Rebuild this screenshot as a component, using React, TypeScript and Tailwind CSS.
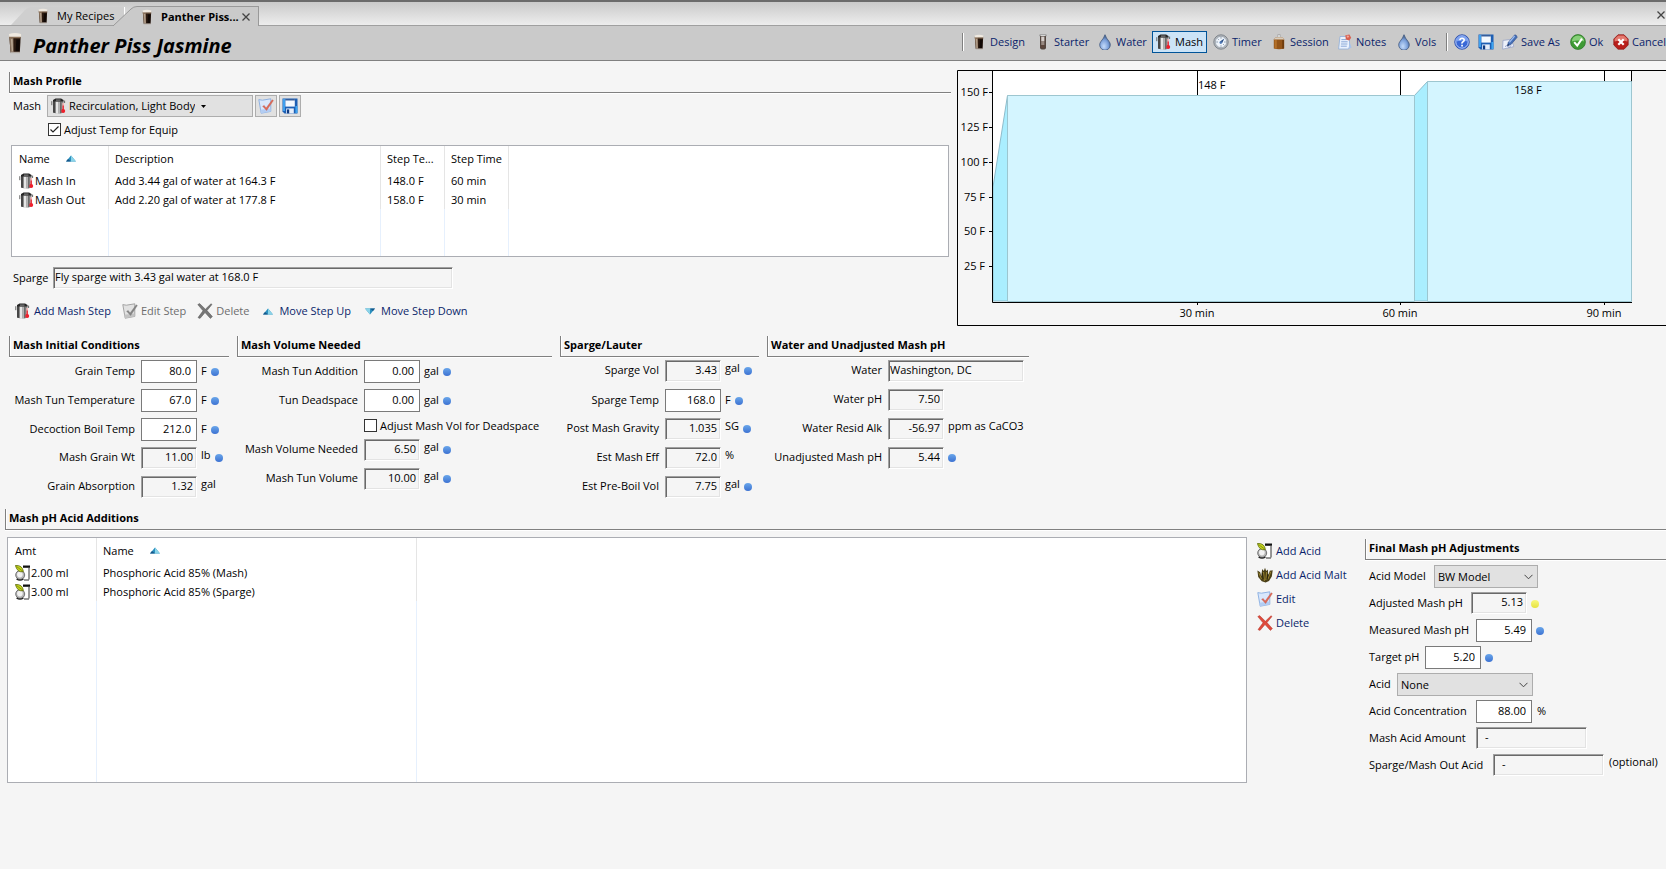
import { ReactNode, useId } from 'react';

interface IconProps {
  className?: string;
}

function BeerIcon({ className = 'size-4' }: IconProps) {
  return (
    <svg viewBox="0 0 16 16" className={`shrink-0 ${className}`} aria-hidden="true">
      <path d="M3.8 2.5h8.4l-.7 12.500H4.8z" fill="#2b1a10" />
      <path d="M3.8 3h3l.2 11.800H4.8z" fill="#8b745f" />
      <path d="M5 5h1.200l.4 9h-1z" fill="#b7a592" />
      <path d="M9 5.500h2.600l-.4 8.500H8.400z" fill="#100805" />
      <path d="M3.600 1.400Q8 .2 12.400 1.400v2.300H3.700z" fill="#efe9e0" />
      <path d="M3.700 3.500h8.500v1.100H3.800z" fill="#8a7058" />
      <path d="M4.700 14.400h6.900v1H4.700z" fill="#b3aca5" />
    </svg>
  );
}

function TubeIcon() {
  return (
    <svg viewBox="0 0 16 16" className="size-4 shrink-0" aria-hidden="true">
      <path d="M5 1h6v12.500Q11 15.500 8 15.500T5 13.500z" fill="#54463f" />
      <path d="M6.200 2.500h3.200v4.500H6.200z" fill="#d6cfcb" />
      <path d="M6.200 7h3.200v4H6.200z" fill="#978880" />
      <path d="M6.200 11h3.200v3H6.200z" fill="#5d463c" />
      <path d="M4.600.6h6.800v1.600H4.600z" fill="#6c6c6c" />
      <path d="M5.400 1h5.200v.8H5.400z" fill="#f1f1f1" />
    </svg>
  );
}

function DropIcon() {
  const id = useId();
  return (
    <svg viewBox="0 0 16 16" className="size-4 shrink-0" aria-hidden="true">
      <radialGradient id={id} cx=".4" cy=".75" r=".7">
        <stop offset="0" stopColor="#c4dbfa" />
        <stop offset=".6" stopColor="#7ba0da" />
        <stop offset="1" stopColor="#3e5b88" />
      </radialGradient>
      <path
        d="M8 .7Q9 4 12 7.400a5.300 5.300 0 1 1-8 0Q7 4 8 .7z"
        fill={`url(#${id})`}
        stroke="#445b80"
        strokeWidth=".8"
      />
    </svg>
  );
}

function MashIcon() {
  return (
    <svg viewBox="0 0 16 16" className="size-4 shrink-0" aria-hidden="true">
      <path d="M2 2.500h10.500v12Q7 16.200 2 14.500z" fill="#8a8a8a" />
      <path d="M2 2.500h2v12.400l-2-.5z" fill="#464646" />
      <path d="M5 3.500h2.200v12H5z" fill="#e6e6e6" />
      <path d="M7.200 3.500H9v12H7.200z" fill="#b4b4b4" />
      <path d="M9 3.500h1.400v11.800H9z" fill="#6a6a6a" />
      <path d="M2 3.400V2L4.500.6h5.600L12.500 2v1.400z" fill="#262626" />
      <path d="M5 1.600h4.500v1H5z" fill="#8f8f8f" />
      <path d="M.8 3.200v4M13.600 2.600v2.400" stroke="#666" />
      <path d="M12.200 5v6" stroke="#f2b5b5" strokeWidth="1.700" />
      <path d="M12.200 7.500v5" stroke="#e62430" strokeWidth="1.300" />
      <circle cx="12.200" cy="13" r="2" fill="#f0202c" />
    </svg>
  );
}

function GaugeIcon() {
  return (
    <svg viewBox="0 0 16 16" className="size-4 shrink-0" aria-hidden="true">
      <circle cx="8" cy="8" r="7.200" fill="#b3b8be" stroke="#7f858c" />
      <circle cx="8" cy="8" r="5.600" fill="#eef4fb" stroke="#8f979f" strokeWidth=".6" />
      <path d="M8 3.200v1.400M3.400 8h1.400M4.800 4.800l.9.9M11.200 11.200l-.9-.9M12.600 8h-1.400M8 12.600v-1.200" stroke="#6d7f95" strokeWidth=".9" />
      <path d="M11.400 4.400L9 9.200 7 7.600z" fill="#274b83" />
      <circle cx="7.800" cy="8.600" r="1.300" fill="#4e78b5" />
    </svg>
  );
}

function SessionIcon() {
  return (
    <svg viewBox="0 0 16 16" className="size-4 shrink-0" aria-hidden="true">
      <path d="M6.800.6h2.400v3H6.800z" fill="#e6e6e6" stroke="#888" strokeWidth=".5" />
      <path d="M2.800 5.500Q3 3.600 6.400 3.200h3.200Q13 3.600 13.200 5.500v9q-5.200 1.400-10.400 0z" fill="#945519" />
      <path d="M2.800 5.500Q3 3.600 6.400 3.200h3.200Q13 3.600 13.200 5.500z" fill="#d8cdbd" />
      <path d="M3.600 6h2.200v8.600H3.600z" fill="#b3702a" />
      <path d="M11.200 6h1.800v8.400l-1.800.4z" fill="#6f3c0d" />
    </svg>
  );
}

function NotesIcon() {
  return (
    <svg viewBox="0 0 16 16" className="size-4 shrink-0" aria-hidden="true">
      <path d="M3 2.500h9.500V13l-1 2H1.600z" fill="#eaf2fd" stroke="#8fadd8" strokeWidth=".8" />
      <path d="M4.400 5.600h5M4.200 7.800h6.400M4 10h6.400M3.800 12.200h6" stroke="#8aa9d8" />
      <path d="M11.600 15L12.600 8l2 5.600z" fill="#a8c2ea" />
      <path d="M8.400 1.200l4-.8 1.800 3.400-2 2.600-3.400-1z" fill="#d8604f" />
      <path d="M9.400 1.800l2-.4.8 1.600-1.800.8z" fill="#f3a99d" />
    </svg>
  );
}

function HelpIcon() {
  return (
    <svg viewBox="0 0 16 16" className="size-4 shrink-0" aria-hidden="true">
      <circle cx="8" cy="8" r="7.300" fill="#3a68d6" stroke="#2a4da8" strokeWidth=".8" />
      <circle cx="8" cy="8" r="6.200" fill="none" stroke="#c5d6fa" strokeWidth=".9" />
      <path d="M2.600 7.400a5.400 5.400 0 0 1 10.800 0q-5-2-10.800 0z" fill="#7fa4f2" />
      <path d="M5.900 6.300Q6 4.300 8.100 4.300T10.200 6.100Q10.200 7.200 9 7.800T8 9.600" fill="none" stroke="#fff" strokeWidth="1.600" />
      <path d="M7.200 10.800h1.700v1.600H7.200z" fill="#fff" />
    </svg>
  );
}

function SaveIcon() {
  return (
    <svg viewBox="0 0 16 16" className="size-4 shrink-0" aria-hidden="true">
      <path d="M.5.5h15v15h-13l-2-2z" fill="#1d5fb4" />
      <path d="M1 1h2v12H1z" fill="#3fa0ee" />
      <path d="M3.400 1.200h9.400v7.400H3.400z" fill="#f4f9ff" />
      <path d="M3.400 1.200h9.400v1.200H3.400z" fill="#113e86" />
      <path d="M13.400 8h2v7h-2z" fill="#3fa5f2" />
      <path d="M4.200 10.400h7.600v5H4.200z" fill="#e6eefa" />
      <path d="M5 11.400h2.200v4H5z" fill="#0f3a80" />
    </svg>
  );
}

function SaveAsIcon() {
  return (
    <svg viewBox="0 0 16 16" className="size-4 shrink-0" aria-hidden="true">
      <path d="M1 6.400l8.400-1 2.400 7.200L.6 15.200z" fill="#eef1fa" stroke="#98a5c9" strokeWidth=".8" />
      <path d="M3 12.600q2-2 3 0t3-1" fill="none" stroke="#7a8cbd" strokeWidth=".8" />
      <path d="M12.800.8q2 .2 2.400 2.400L9 10.600l-3.600 1.200 1-3.600z" fill="#456fb6" stroke="#2d4a86" strokeWidth=".6" />
      <path d="M12.600 2L7.400 8.400" stroke="#9dbcf0" strokeWidth="1.200" />
      <path d="M5.400 11.800l.6-2 1.200 1.400z" fill="#1c2e57" />
    </svg>
  );
}

function OkIcon() {
  return (
    <svg viewBox="0 0 16 16" className="size-4 shrink-0" aria-hidden="true">
      <circle cx="8" cy="8" r="7.400" fill="#3f9a35" stroke="#2f7a2a" strokeWidth=".8" />
      <path d="M1.800 7.600a6.200 6.200 0 0 1 12.400 0q-6-2-12.400 0z" fill="#86cf78" />
      <path d="M4.200 8.200l3 3.400L12 4.600" fill="none" stroke="#fff" strokeWidth="2" />
    </svg>
  );
}

function CancelIcon() {
  return (
    <svg viewBox="0 0 16 16" className="size-4 shrink-0" aria-hidden="true">
      <path d="M5 .8h6L15.200 5v6L11 15.200H5L.8 11V5z" fill="#b81f1b" stroke="#8c1512" strokeWidth=".7" />
      <path d="M5.200 1.600h5.600L14.400 5v2.600q-6-2-12.800 0V5z" fill="#e37a70" />
      <path d="M5.300 5.300l5.400 5.400M10.700 5.300l-5.400 5.400" stroke="#fff" strokeWidth="2.200" />
    </svg>
  );
}

function EditIcon({ gray }: { gray?: boolean }) {
  return (
    <svg viewBox="0 0 16 16" className="size-4 shrink-0" aria-hidden="true">
      <path
        d="M.8 1.600l3.600.6 8.400-1.400v12.600L3.200 15.200z"
        fill={gray ? '#e2e2e2' : '#d9e7fb'}
        stroke={gray ? '#9c9c9c' : '#86abe0'}
        strokeWidth=".9"
      />
      <path d="M3.200 15.200l-.8-3.400 9.800-1.200.6 2.800z" fill={gray ? '#c3c3c3' : '#b3cdf3'} />
      <path
        d="M4.600 8.200l1.600-.8 1.900 2.600L14.200 1.800l1.200.8-6.800 10z"
        fill={gray ? '#858585' : '#dd6a58'}
        stroke={gray ? '#6d6d6d' : '#b9483a'}
        strokeWidth=".3"
      />
    </svg>
  );
}

function DeleteIcon({ gray }: { gray?: boolean }) {
  return (
    <svg viewBox="0 0 16 16" className="size-4 shrink-0" aria-hidden="true">
      <path
        d="M.8 1.600L2.600.6 8.400 6.200 14 .8l1 .6-5 6.200 5.400 6-2 1.800L8 9.600l-5 5.800-2-.8 5-6.800z"
        fill={gray ? '#777' : '#de4a3c'}
        stroke={gray ? '#555' : '#b3382d'}
        strokeWidth=".5"
      />
    </svg>
  );
}

function AcidIcon() {
  return (
    <svg viewBox="0 0 16 16" className="size-4 shrink-0" aria-hidden="true">
      <path d="M9.500 2.400h4.500v12.100H9.500z" fill="#fff" />
      <path d="M14 3v11.500M9 15h5" fill="none" stroke="#333" />
      <path d="M8 .5h7v2.300H8z" fill="#111" />
      <circle cx="5.200" cy="10" r="4.500" fill="#b5b5b5" stroke="#5a5a5a" strokeWidth=".8" />
      <circle cx="4.900" cy="9.600" r="2.800" fill="#f2f2f2" />
      <path d="M.4.5Q7.400-.2 8.400 6.600 2.400 8 .4.5z" fill="#c3d41c" stroke="#5d6a0b" strokeWidth=".8" />
      <path d="M1.600 1.600l6 4.400" stroke="#6d7a10" strokeWidth=".7" />
      <path d="M1.500 14q3.500 2.400 7 0" fill="none" stroke="#222" strokeWidth="1.200" />
    </svg>
  );
}

function MaltIcon() {
  return (
    <svg viewBox="0 0 16 16" className="size-4 shrink-0" aria-hidden="true">
      <path d="M.4 3.600l2.800 1.600 1 4L5.200 2 6.800 4 8 .8 9.200 4l1.600-1.600.6 5.800 1.400-4.400 2.900-.6-.9 6.400-2.800 4.400-3.400 1.400-3.800-1.200L1.200 10z" fill="#4a3f17" />
      <path d="M1.800 5.600l2.600 6.400M6.600 5l.8 9M9.600 5l-.8 8M13.800 4.600l-2.800 7.400" stroke="#a18b34" strokeWidth=".9" fill="none" />
      <path d="M5.400 6l.8 6M11 7l-.8 5" stroke="#1f1a0a" strokeWidth=".8" />
    </svg>
  );
}

function ArrowIcon({ down }: { down?: boolean }) {
  return (
    <svg viewBox="0 0 10 7" className={`h-[7px] w-[10px] shrink-0 ${down ? 'rotate-180' : ''}`} aria-hidden="true">
      <path d="M5 .500l5 6H0z" fill="#2a8fbe" />
      <path d="M5 .500l5 6H5z" fill="#8ad3e8" />
      <path d="M0 6.500l2-2.400 3 2.400z" fill="#17568a" />
    </svg>
  );
}

function CloseIcon() {
  return (
    <svg viewBox="0 0 8 8" className="size-2 shrink-0" aria-hidden="true">
      <path d="M.5.5l7 7M7.500.5l-7 7" stroke="#444" strokeWidth="1.300" />
    </svg>
  );
}

function Dot({ yellow }: { yellow?: boolean }) {
  return (
    <span
      className={`size-2 shrink-0 rounded-full bg-linear-to-b ${yellow ? 'from-[#f8f87a] to-[#e6e23c]' : 'from-[#6aa6ea] to-[#3d72d2]'}`}
    />
  );
}

function SectionTitle({ children }: { children: ReactNode }) {
  return (
    <h2 className="h-[21px] border-b border-l border-[#808080] pl-[3px] leading-[18px] font-bold whitespace-nowrap shadow-[inset_1px_0_#fff,0_1px_#fff]">
      {children}
    </h2>
  );
}

const sunken =
  'h-[22px] border border-[#a0a0a0] border-r-white border-b-white bg-[#f5f5f5] shadow-[inset_1px_1px_#696969,inset_-1px_-1px_#e3e3e3] outline-none pb-[3px]';

const editable = 'h-[23px] border border-[#7a7a7a] bg-white pr-[5px] pb-[2px] outline-none';

interface FieldProps {
  label: string;
  value: string;
  labelWidth: string;
  unit?: string;
  readOnly?: boolean;
  dot?: 'blue' | 'yellow';
  width?: string;
  left?: boolean;
}

function Field({ label, value, labelWidth, unit, readOnly, dot, width = 'w-14', left }: FieldProps) {
  const id = useId();
  return (
    <div className={`flex items-center ${readOnly ? 'h-[22px]' : 'h-[23px]'}`}>
      <label htmlFor={id} className={`shrink-0 pb-0.5 text-right whitespace-nowrap ${labelWidth}`}>
        {label}
      </label>
      <input
        id={id}
        readOnly={readOnly}
        defaultValue={value}
        className={`ml-1.5 shrink-0 ${width} ${left ? 'pl-px' : 'text-right'} ${
          readOnly ? `${sunken} pr-[3px]` : editable
        }`}
      />
      {unit && <span className={`ml-1 whitespace-nowrap ${readOnly ? 'self-start leading-4' : 'pb-0.5'}`}>{unit}</span>}
      {dot && (
        <span className="ml-1 flex">
          <Dot yellow={dot === 'yellow'} />
        </span>
      )}
    </div>
  );
}

interface ToolButtonProps {
  icon: ReactNode;
  label: string;
  width: string;
  active?: boolean;
}

function ToolButton({ icon, label, width, active }: ToolButtonProps) {
  return (
    <button
      className={`flex h-[22px] shrink-0 items-center gap-[3px] border pl-[3px] whitespace-nowrap ${width} ${
        active ? 'border-[#005499] bg-[#cce4f7] text-black' : 'border-transparent text-[#0a1f6b]'
      }`}
    >
      {icon}
      {label}
    </button>
  );
}

function LinkButton({ icon, label, disabled }: { icon: ReactNode; label: string; disabled?: boolean }) {
  return (
    <button
      disabled={disabled}
      className={`flex h-5 items-center gap-[3px] whitespace-nowrap ${disabled ? 'text-[#6d6d6d]' : 'text-[#0a1f6b]'}`}
    >
      {icon}
      {label}
    </button>
  );
}

const cell = 'h-[19px] truncate border-r border-[#e5e5e5] p-0 pl-1.5 text-left font-normal first:pl-[7px]';
const filler = 'border-r border-[#e6f0fd] p-0';

function MashSteps() {
  const steps = [
    ['Mash In', 'Add 3.44 gal of water at 164.3 F', '148.0 F', '60 min'],
    ['Mash Out', 'Add 2.20 gal of water at 177.8 F', '158.0 F', '30 min'],
  ];
  return (
    <div className="mt-[7px] mr-0.5 ml-0.5 h-28 border border-[#abadb3] bg-white">
      <table className="h-full w-full table-fixed border-separate border-spacing-0">
        <colgroup>
          <col className="w-[97px]" />
          <col className="w-[272px]" />
          <col className="w-[64px]" />
          <col className="w-[64px]" />
          <col />
        </colgroup>
        <thead>
          <tr className="h-[25px]">
            <th className={cell}>
              <span className="flex items-center gap-4">
                Name
                <ArrowIcon />
              </span>
            </th>
            <th className={cell}>Description</th>
            <th className={cell}>Step Te...</th>
            <th className={cell}>Step Time</th>
            <td />
          </tr>
        </thead>
        <tbody>
          {steps.map(([name, description, temp, time]) => (
            <tr key={name} className="h-[19px]">
              <td className={cell}>
                <span className="flex items-center">
                  <MashIcon />
                  {name}
                </span>
              </td>
              <td className={cell}>{description}</td>
              <td className={cell}>{temp}</td>
              <td className={cell}>{time}</td>
              <td />
            </tr>
          ))}
          <tr>
            <td className={filler} />
            <td className={filler} />
            <td className={filler} />
            <td className={filler} />
            <td />
          </tr>
        </tbody>
      </table>
    </div>
  );
}

function AcidTable() {
  const acids = [
    ['2.00 ml', 'Phosphoric Acid 85% (Mash)'],
    ['3.00 ml', 'Phosphoric Acid 85% (Sparge)'],
  ];
  return (
    <div className="h-[246px] min-w-0 flex-1 border border-[#abadb3] bg-white">
      <table className="h-full w-full table-fixed border-separate border-spacing-0">
        <colgroup>
          <col className="w-[89px]" />
          <col className="w-80" />
          <col />
        </colgroup>
        <thead>
          <tr className="h-[25px]">
            <th className={cell}>Amt</th>
            <th className={cell}>
              <span className="flex items-center gap-4">
                Name
                <ArrowIcon />
              </span>
            </th>
            <td />
          </tr>
        </thead>
        <tbody>
          {acids.map(([amount, name]) => (
            <tr key={name} className="h-[19px]">
              <td className={cell}>
                <span className="flex items-center">
                  <AcidIcon />
                  {amount}
                </span>
              </td>
              <td className={cell}>{name}</td>
              <td />
            </tr>
          ))}
          <tr>
            <td className={filler} />
            <td className={filler} />
            <td />
          </tr>
        </tbody>
      </table>
    </div>
  );
}

function MashChart() {
  const temps = [
    { label: '150 F', y: 22 },
    { label: '125 F', y: 57 },
    { label: '100 F', y: 92 },
    { label: '75 F', y: 127 },
    { label: '50 F', y: 161 },
    { label: '25 F', y: 196 },
  ];
  const times = [
    { label: '30 min', x: 240 },
    { label: '60 min', x: 443 },
    { label: '90 min', x: 647 },
  ];
  return (
    <svg className="h-64 w-[709px] shrink-0 text-[11px]" viewBox="0 0 709 256" role="img" aria-label="Mash temperature profile">
      <path d="M709 .5H.5v255H709" fill="none" stroke="#000" />
      <path d="M36 1h639v231H36z" fill="#fff" />
      {times.map(({ label, x }) => (
        <g key={label}>
          <path d={`M${x}.5 1v234`} stroke="#000" />
          <text x={x} y="247" textAnchor="middle">
            {label}
          </text>
        </g>
      ))}
      <path d="M674.500 1v12" stroke="#000" />
      <path d="M36 231V117L50.500 25.500V231z" fill="#aaeeff" stroke="#8fbccb" />
      <path d="M457.500 231V25.500L470.500 11.500V231z" fill="#aaeeff" stroke="#8fbccb" />
      <path d="M50.500 25.500h407V231.500h-407z" fill="#d4f5ff" stroke="#9dc6d0" />
      <path d="M470.500 11.500h204v220h-204z" fill="#d4f5ff" stroke="#9dc6d0" />
      <path d="M35.500 1v231.500H675" fill="none" stroke="#000" />
      {temps.map(({ label, y }) => (
        <g key={label}>
          <path d={`M32 ${y}.5h4`} stroke="#000" />
          <text x={label.length > 4 ? 31 : 28} y={y + 4} textAnchor="end">
            {label}
          </text>
        </g>
      ))}
      <text x="241" y="19">148 F</text>
      <text x="571" y="24" textAnchor="middle">158 F</text>
    </svg>
  );
}

function SelectRow({ label, value, labelWidth, width }: { label: string; value: string; labelWidth: string; width: string }) {
  const id = useId();
  return (
    <div className="flex h-[23px] items-center">
      <label htmlFor={id} className={`shrink-0 pb-0.5 whitespace-nowrap ${labelWidth}`}>
        {label}
      </label>
      <div className={`grid h-[23px] items-center border border-[#adadad] bg-[#e1e1e1] ${width}`}>
        <select id={id} className="col-start-1 row-start-1 h-full appearance-none pl-[3px] outline-none">
          <option>{value}</option>
        </select>
        <svg viewBox="0 0 9 6" className="pointer-events-none col-start-1 row-start-1 mr-1 h-1.5 w-[9px] justify-self-end" aria-hidden="true">
          <path d="M.5.8l4 4 4-4" fill="none" stroke="#444" />
        </svg>
      </div>
    </div>
  );
}

function FinalField({ label, value, labelWidth, unit, readOnly, dot, width = 'w-14', left }: FieldProps) {
  const id = useId();
  return (
    <div className="flex h-[23px] items-center">
      <label htmlFor={id} className={`shrink-0 pb-0.5 whitespace-nowrap ${labelWidth}`}>
        {label}
      </label>
      <input
        id={id}
        readOnly={readOnly}
        defaultValue={value}
        className={`shrink-0 ${width} ${left ? 'pl-2' : 'text-right'} ${
          readOnly ? `${sunken} self-start pr-[3px]` : editable
        }`}
      />
      {unit && <span className={`ml-[5px] whitespace-nowrap ${readOnly ? 'self-start leading-4' : 'pb-0.5'}`}>{unit}</span>}
      {dot && (
        <span className="ml-1 flex">
          <Dot yellow={dot === 'yellow'} />
        </span>
      )}
    </div>
  );
}

function TabBar() {
  return (
    <nav className="flex h-[26px] items-end border-t-2 border-b border-t-[#6b6b6b] border-b-[#a0a0a0] bg-linear-to-b from-[#cacaca] to-[#ededed]">
      <button className="ml-[11px] flex h-[18px] shrink-0 items-center">
        <svg viewBox="0 0 24 18" className="h-[18px] w-6" aria-hidden="true">
          <path d="M0 18L14 3Q17 0 22 0h2v18z" fill="#cfcfcf" />
        </svg>
        <span className="flex h-[18px] w-[90px] items-center gap-1.5 border-r border-white bg-[#cfcfcf] whitespace-nowrap">
          <BeerIcon />
          My Recipes
        </span>
      </button>
      <div className="-mb-px -ml-3 flex h-5 shrink-0">
        <svg viewBox="0 0 24 20" className="h-5 w-6" aria-hidden="true">
          <path d="M0 20L18 3Q20.500 .5 24 .5V20z" fill="#cacaca" />
          <path d="M0 20L18 3Q20.500 .5 24 .5" fill="none" stroke="#999" />
        </svg>
        <div className="flex w-[122px] items-center border-t border-r border-[#999] bg-[#cacaca] pl-0.5">
          <button className="flex items-center gap-1.5 font-bold whitespace-nowrap">
            <BeerIcon />
            Panther Piss...
          </button>
          <button aria-label="Close tab" className="ml-auto pr-2">
            <CloseIcon />
          </button>
        </div>
      </div>
      <button aria-label="Close all" className="mr-px mb-1.5 ml-auto">
        <CloseIcon />
      </button>
    </nav>
  );
}

function Header() {
  return (
    <header className="flex h-[35px] items-center border-b border-[#808080] bg-[#cacaca]">
      <BeerIcon className="ml-1 size-[22px]" />
      <h1 className="mt-1.5 ml-[7px] text-[20px] leading-6 font-bold whitespace-nowrap italic">Panther Piss Jasmine</h1>
      <div className="mb-0.5 ml-auto flex items-center">
        <span className="mr-[3px] h-[18px] w-0.5 border-l border-[#808080] bg-white" />
        <ToolButton width="w-16" icon={<BeerIcon />} label="Design" />
        <ToolButton width="w-[62px]" icon={<TubeIcon />} label="Starter" />
        <ToolButton width="w-[59px]" icon={<DropIcon />} label="Water" />
        <ToolButton width="w-[55px]" icon={<MashIcon />} label="Mash" active />
        <span className="w-0.5" />
        <ToolButton width="w-[58px]" icon={<GaugeIcon />} label="Timer" />
        <ToolButton width="w-[66px]" icon={<SessionIcon />} label="Session" />
        <ToolButton width="w-[59px]" icon={<NotesIcon />} label="Notes" />
        <ToolButton width="w-[54px]" icon={<DropIcon />} label="Vols" />
        <span className="mr-0.5 h-[18px] w-0.5 border-l border-[#808080] bg-white" />
        <button aria-label="Help" className="px-1">
          <HelpIcon />
        </button>
        <button aria-label="Save" className="px-1">
          <SaveIcon />
        </button>
        <ToolButton width="w-[68px]" icon={<SaveAsIcon />} label="Save As" />
        <ToolButton width="w-[43px]" icon={<OkIcon />} label="Ok" />
        <ToolButton width="w-[57px]" icon={<CancelIcon />} label="Cancel" />
      </div>
    </header>
  );
}

export default function App() {
  return (
    <div className="min-h-screen overflow-hidden bg-[#f5f5f5] font-['Open_Sans','Noto_Sans',sans-serif] text-[11px] leading-4 text-black">
      <TabBar />
      <Header />

      <div className="flex gap-1.5 pt-[9px] pl-[9px]">
        <section className="min-w-0 flex-1 pt-0.5">
          <SectionTitle>Mash Profile</SectionTitle>
          <div className="mt-0.5 flex h-[22px] items-center pl-1">
            <label htmlFor="mash" className="w-[34px]">
              Mash
            </label>
            <div className="flex h-[22px] w-[206px] items-center border border-[#adadad] bg-[#e1e1e1] pl-[3px]">
              <MashIcon />
              <select id="mash" className="field-sizing-content appearance-none pl-0.5 outline-none">
                <option>Recirculation, Light Body</option>
              </select>
              <svg viewBox="0 0 5 3" className="pointer-events-none ml-1.5 h-[3px] w-[5px]" aria-hidden="true">
                <path d="M0 0h5L2.500 3z" />
              </svg>
            </div>
            <button aria-label="Edit mash" className="ml-0.5 border border-[#adadad] bg-[#e1e1e1] p-0.5">
              <EditIcon />
            </button>
            <button aria-label="Save mash" className="ml-0.5 border border-[#adadad] bg-[#e1e1e1] p-0.5">
              <SaveIcon />
            </button>
          </div>
          <label className="mt-1 flex h-[17px] items-center gap-[3px] pl-[39px]">
            <span className="grid size-[13px] items-center">
              <input type="checkbox" defaultChecked className="peer col-start-1 row-start-1 size-[13px] appearance-none border border-[#333] bg-white" />
              <svg viewBox="0 0 13 13" className="pointer-events-none invisible col-start-1 row-start-1 size-[13px] peer-checked:visible" aria-hidden="true">
                <path d="M2.500 6.500l2.500 2.500 5.500-5.500" fill="none" stroke="#222" strokeWidth="1.200" />
              </svg>
            </span>
            Adjust Temp for Equip
          </label>
          <MashSteps />
          <div className="mt-2.5 flex h-[22px] items-center pl-1">
            <label htmlFor="sparge" className="w-10">
              Sparge
            </label>
            <input id="sparge" readOnly defaultValue="Fly sparge with 3.43 gal water at 168.0 F" className={`w-[400px] pl-px ${sunken}`} />
          </div>
          <div className="mt-3 flex h-5 items-center gap-[11px] pl-1.5">
            <LinkButton icon={<MashIcon />} label="Add Mash Step" />
            <LinkButton icon={<EditIcon gray />} label="Edit Step" disabled />
            <LinkButton icon={<DeleteIcon gray />} label="Delete" disabled />
            <LinkButton icon={<span className="flex w-4 justify-center"><ArrowIcon /></span>} label="Move Step Up" />
            <LinkButton icon={<span className="flex w-4 justify-center"><ArrowIcon down /></span>} label="Move Step Down" />
          </div>
        </section>
        <MashChart />
      </div>

      <div className="mt-[10px] flex items-start gap-2 pl-[9px]">
        <section className="flex w-[220px] flex-col">
          <SectionTitle>Mash Initial Conditions</SectionTitle>
          <div className="mt-[3px] flex flex-col gap-1.5">
            <Field labelWidth="w-[126px]" label="Grain Temp" value="80.0" unit="F" dot="blue" />
            <Field labelWidth="w-[126px]" label="Mash Tun Temperature" value="67.0" unit="F" dot="blue" />
            <Field labelWidth="w-[126px]" label="Decoction Boil Temp" value="212.0" unit="F" dot="blue" />
          </div>
          <div className="mt-1.5 flex flex-col gap-[7px]">
            <Field labelWidth="w-[126px]" label="Mash Grain Wt" value="11.00" unit="lb" dot="blue" readOnly />
            <Field labelWidth="w-[126px]" label="Grain Absorption" value="1.32" unit="gal" readOnly />
          </div>
        </section>

        <section className="flex w-[315px] flex-col">
          <SectionTitle>Mash Volume Needed</SectionTitle>
          <div className="mt-[3px] flex flex-col gap-1.5">
            <Field labelWidth="w-[121px]" label="Mash Tun Addition" value="0.00" unit="gal" dot="blue" />
            <Field labelWidth="w-[121px]" label="Tun Deadspace" value="0.00" unit="gal" dot="blue" />
            <label className="flex h-[15px] items-center gap-[3px] pl-[127px] whitespace-nowrap">
              <input type="checkbox" className="size-[13px] shrink-0 appearance-none border border-[#333] bg-white" />
              Adjust Mash Vol for Deadspace
            </label>
          </div>
          <div className="mt-1.5 flex flex-col gap-[7px]">
            <Field labelWidth="w-[121px]" label="Mash Volume Needed" value="6.50" unit="gal" dot="blue" readOnly />
            <Field labelWidth="w-[121px]" label="Mash Tun Volume" value="10.00" unit="gal" dot="blue" readOnly />
          </div>
        </section>

        <section className="flex w-[199px] flex-col">
          <SectionTitle>Sparge/Lauter</SectionTitle>
          <div className="mt-[3px] flex flex-col gap-[7px]">
            <Field labelWidth="w-[99px]" label="Sparge Vol" value="3.43" unit="gal" dot="blue" readOnly />
            <div className="-mb-px">
              <Field labelWidth="w-[99px]" label="Sparge Temp" value="168.0" unit="F" dot="blue" />
            </div>
            <Field labelWidth="w-[99px]" label="Post Mash Gravity" value="1.035" unit="SG" dot="blue" readOnly />
            <Field labelWidth="w-[99px]" label="Est Mash Eff" value="72.0" unit="%" readOnly />
            <Field labelWidth="w-[99px]" label="Est Pre-Boil Vol" value="7.75" unit="gal" dot="blue" readOnly />
          </div>
        </section>

        <section className="flex w-[262px] flex-col">
          <SectionTitle>Water and Unadjusted Mash pH</SectionTitle>
          <div className="mt-[3px] flex flex-col gap-[7px]">
            <Field labelWidth="w-[115px]" label="Water" value="Washington, DC" width="w-[136px]" readOnly left />
            <Field labelWidth="w-[115px]" label="Water pH" value="7.50" readOnly />
            <Field labelWidth="w-[115px]" label="Water Resid Alk" value="-56.97" unit="ppm as CaCO3" readOnly />
            <Field labelWidth="w-[115px]" label="Unadjusted Mash pH" value="5.44" dot="blue" readOnly />
          </div>
        </section>
      </div>

      <section className="mt-[11px] pl-[5px]">
        <SectionTitle>Mash pH Acid Additions</SectionTitle>
        <div className="mt-[7px] flex items-start pl-0.5">
          <AcidTable />
          <div className="ml-2.5 flex w-[108px] flex-col gap-1 pt-1">
            <LinkButton icon={<AcidIcon />} label="Add Acid" />
            <LinkButton icon={<MaltIcon />} label="Add Acid Malt" />
            <LinkButton icon={<EditIcon />} label="Edit" />
            <LinkButton icon={<DeleteIcon />} label="Delete" />
          </div>
          <div className="w-[301px] pt-0.5">
            <SectionTitle>Final Mash pH Adjustments</SectionTitle>
            <div className="mt-[5px] flex flex-col gap-1 pl-1">
              <SelectRow labelWidth="w-[65px]" label="Acid Model" value="BW Model" width="w-[104px]" />
              <FinalField labelWidth="w-[102px]" label="Adjusted Mash pH" value="5.13" dot="yellow" readOnly />
              <FinalField labelWidth="w-[107px]" label="Measured Mash pH" value="5.49" dot="blue" />
              <FinalField labelWidth="w-14" label="Target pH" value="5.20" dot="blue" />
              <SelectRow labelWidth="w-7" label="Acid" value="None" width="w-[136px]" />
              <FinalField labelWidth="w-[107px]" label="Acid Concentration" value="88.00" unit="%" />
              <FinalField labelWidth="w-[107px]" label="Mash Acid Amount" value="-" width="w-[111px]" readOnly left />
              <FinalField labelWidth="w-[124px]" label="Sparge/Mash Out Acid" value="-" width="w-[111px]" unit="(optional)" readOnly left />
            </div>
          </div>
        </div>
      </section>
    </div>
  );
}
